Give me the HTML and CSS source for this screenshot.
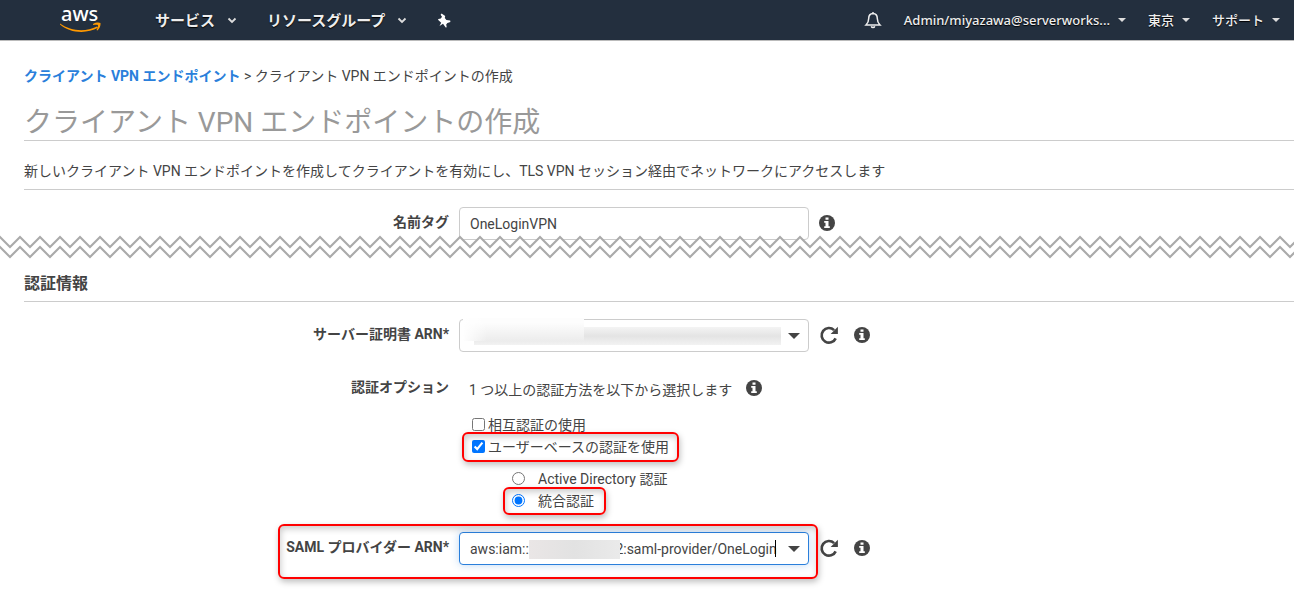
FILE: index.html
```
<!DOCTYPE html>
<html lang="ja">
<head>
    <meta charset="UTF-8">
    <meta name="viewport" content="width=device-width, initial-scale=1.0">
    <title>クライアント VPN エンドポイントの作成</title>
    <link rel="stylesheet" href="styles.css">
</head>
<body>
    <!-- Shared icons -->
    <svg class="sprite" width="0" height="0" aria-hidden="true">
        <symbol id="icon-info" viewBox="0 0 16 16">
            <circle cx="8" cy="8" r="8" fill="#444"/>
            <path d="M6.5 2.400h3v2.400h-3zM5.200 6h4.300v5.200h1.300V13H5.200v-1.800h1.300V7.800H5.200z" fill="#fff"/>
        </symbol>
        <symbol id="icon-refresh" viewBox="0 0 18 18">
            <path d="M15 12A6.600 6.600 0 1 1 13.600 4.600" fill="none" stroke="#444" stroke-width="2.400"/>
            <path d="M17 1.500v6.500h-6.500z" fill="#444"/>
        </symbol>
        <symbol id="icon-chevron" viewBox="0 0 10 7">
            <path d="M1.500 1.500L5 5l3.500-3.500" fill="none" stroke="#ddd" stroke-width="1.800"/>
        </symbol>
    </svg>

    <header class="navbar">
        <a class="logo" href="#" aria-label="aws">
            <svg width="44" height="40" viewBox="0 0 44 40">
                <text x="2" y="21" class="logo-text">aws</text>
                <path d="M1 23.500c11 8 26 8.500 37 3l1 1.300C28 34 11 33.500 1 24.500z" fill="#f90"/>
                <path d="M34 24c3-1.800 6-1.800 7.500-1 .2 2.500-.7 5.500-3 7.500l-1-.4c1-2 1.600-3.600 1.400-5.200-1.400-.3-3 0-4.700.2z" fill="#f90"/>
            </svg>
        </a>
        <nav class="nav-main">
            <button type="button" class="nav-item">サービス <svg width="10" height="7"><use href="#icon-chevron"/></svg></button>
            <button type="button" class="nav-item">リソースグループ <svg width="10" height="7"><use href="#icon-chevron"/></svg></button>
            <button type="button" class="nav-item" aria-label="ピン">
                <svg width="14" height="15" viewBox="0 0 14 15"><path d="M4.600.4L8.200 3l-.4 2 1.600 2 3.800.6.200 1.300-3 1.200-1.200 1.300.5 2.800-1 .2-2.700-3.700L2.500 13l1.700-3.300L1 6.800l.4-.9 2.400-.3L5 3.700 3.600 1.800z" fill="#fff"/></svg>
            </button>
        </nav>
        <nav class="nav-account">
            <button type="button" class="nav-link" aria-label="通知">
                <svg width="18" height="18" viewBox="0 0 18 18"><path d="M9 1v1.500C5.800 2.700 4.700 5 4.700 7.500c0 3.500-1 4.800-2.700 6.500h14c-1.700-1.700-2.700-3-2.700-6.500C13.300 5 12.200 2.700 9 2.500M7.300 15.200c.5 1.800 2.900 1.800 3.400 0" fill="none" stroke="#eee" stroke-width="1.500"/></svg>
            </button>
            <button type="button" class="nav-link">Admin/miyazawa@serverworks... <span class="arrow"></span></button>
            <button type="button" class="nav-link">東京 <span class="arrow"></span></button>
            <button type="button" class="nav-link">サポート <span class="arrow"></span></button>
        </nav>
    </header>

    <main class="content">
        <div class="breadcrumb"><a href="#">クライアント VPN エンドポイント</a> &gt; クライアント VPN エンドポイントの作成</div>
        <h1>クライアント VPN エンドポイントの作成</h1>
        <p class="description">新しいクライアント VPN エンドポイントを作成してクライアントを有効にし、TLS VPN セッション経由でネットワークにアクセスします</p>

        <form>
            <div class="form-row">
                <label class="row-label" for="name_tag">名前タグ</label>
                <div class="field"><input type="text" id="name_tag" value="OneLoginVPN"></div>
                <svg class="icon" width="16" height="16"><use href="#icon-info"/></svg>
            </div>

            <svg class="zigzag" width="100%" height="26" aria-hidden="true">
                <defs>
                    <pattern id="zigzag" width="20" height="26" patternUnits="userSpaceOnUse">
                        <path d="M-10 13L0 3l10 10L20 3l10 10v10L20 13 10 23 0 13-10 23z" fill="#fff"/>
                        <path d="M-10 13L0 3l10 10L20 3l10 10M-10 23L0 13l10 10 10-10 10 10" fill="none" stroke="#aaa" stroke-width="2"/>
                    </pattern>
                </defs>
                <rect width="100%" height="26" fill="url(#zigzag)"/>
            </svg>

            <h2>認証情報</h2>

            <div class="form-row">
                <label class="row-label" for="server_arn">サーバー証明書 ARN*</label>
                <div class="field combo">
                    <input type="text" id="server_arn">
                    <span class="mask mask-bottom"></span>
                    <span class="mask mask-top"></span>
                    <button type="button" class="toggle" aria-label="開く"></button>
                </div>
                <svg class="icon icon-refresh" width="20" height="20"><use href="#icon-refresh"/></svg>
                <svg class="icon" width="16" height="16"><use href="#icon-info"/></svg>
            </div>

            <div class="form-row options-row">
                <span class="row-label">認証オプション</span>
                <div class="options">
                    <div class="hint">1 つ以上の認証方法を以下から選択します <svg width="16" height="16"><use href="#icon-info"/></svg></div>
                    <label class="option"><input type="checkbox">相互認証の使用</label>
                    <label class="option highlight highlight-check"><input type="checkbox" checked>ユーザーベースの認証を使用</label>
                    <div class="sub-options">
                        <label class="option"><input type="radio" name="auth">Active Directory 認証</label>
                        <label class="option highlight highlight-radio"><input type="radio" name="auth" checked>統合認証</label>
                    </div>
                </div>
            </div>

            <div class="form-row highlight highlight-row">
                <label class="row-label" for="saml_arn">SAML プロバイダー ARN*</label>
                <div class="field combo focused">
                    <input type="text" id="saml_arn" value="aws:iam::&#8199;&#8199;&#8199;&#8199;&#8199;&#8199;&#8199;&#8199;&#8199;&#8199;&#8199;2:saml-provider/OneLogin">
                    <span class="mask mask-account"></span>
                    <span class="caret"></span>
                    <button type="button" class="toggle" aria-label="開く"></button>
                </div>
                <svg class="icon icon-refresh" width="20" height="20"><use href="#icon-refresh"/></svg>
                <svg class="icon" width="16" height="16"><use href="#icon-info"/></svg>
            </div>
        </form>
    </main>
</body>
</html>
```
FILE: styles.css
```
*, *::after {
    box-sizing: border-box;
}

body {
    margin: 0;
    background: #fff;
    font-family: Roboto, "Noto Sans CJK JP", sans-serif;
    font-size: 14px;
    line-height: 20px;
    color: #444;
}

button {
    border: none;
    background: none;
    padding: 0;
    font-family: inherit;
    cursor: pointer;
}

.sprite {
    position: absolute;
}

.navbar {
    display: flex;
    align-items: center;
    justify-content: space-between;
    height: 41px;
    padding: 0 14px 0 59px;
    background-color: #232f3e;
    border-bottom: 1px solid #bbb;
    font-family: "Noto Sans", "Noto Sans CJK JP", sans-serif;
}

.logo svg {
    display: block;
    overflow: visible;
}

.logo-text {
    font-family: "Noto Sans", sans-serif;
    font-size: 20px;
    font-weight: 500;
    fill: #fff;
}

.nav-main {
    display: flex;
    flex: 1;
    gap: 30px;
    margin-left: 52px;
}

.nav-item {
    display: flex;
    align-items: center;
    gap: 12px;
    font-size: 15px;
    font-weight: bold;
    line-height: 20px;
    color: #eee;
    text-shadow: 0 1px 1px #000;
}

.nav-account {
    display: flex;
    gap: 22px;
}

.nav-link {
    display: flex;
    align-items: center;
    gap: 8px;
    font-size: 13px;
    font-weight: 500;
    line-height: 20px;
    color: #eee;
    text-shadow: 0 1px 1px #000;
}

.arrow {
    border: 4px solid transparent;
    border-top-color: #ddd;
    border-bottom: none;
}

.content {
    padding: 25px 0 24px 24px;
}

.breadcrumb a {
    color: #2a7fdb;
    font-weight: bold;
    text-decoration: none;
}

h1 {
    margin: 20px 0 0;
    border-bottom: 1px solid #ccc;
    font-size: 28px;
    font-weight: 400;
    line-height: 34px;
    color: #999;
}

.description {
    margin: 0 0 17px;
    padding: 20px 0 8px;
    border-bottom: 1px solid #ccc;
}

h2 {
    margin: 14px 0 17px;
    padding-bottom: 7px;
    border-bottom: 1px solid #ccc;
    font-size: 16px;
    line-height: 20px;
}

.form-row {
    display: flex;
    align-items: flex-start;
}

.row-label {
    width: 425px;
    margin-right: 10px;
    padding-top: 5px;
    font-weight: bold;
    text-align: right;
}

.field {
    position: relative;
    width: 350px;
}

.field input {
    display: block;
    width: 100%;
    height: 33px;
    padding: 0 10px;
    border: 1px solid #ccc;
    border-radius: 4px;
    font-family: inherit;
    font-size: 14px;
    color: #444;
}

.combo input {
    padding-right: 30px;
}

.focused input {
    border-color: #2a7fdb;
    box-shadow: 0 0 8px rgba(42, 127, 219, 0.3);
}

.toggle {
    position: absolute;
    top: 14px;
    right: 9px;
    border: 6px solid transparent;
    border-top-color: #444;
    border-bottom: none;
}

.icon {
    flex: none;
    margin: 8px 5px 0 10px;
}

.icon-refresh {
    margin-top: 6px;
}

.zigzag {
    display: block;
    position: relative;
    width: calc(100% + 24px);
    margin: -6px 0 0 -24px;
}

/* Hidden parts of the ARNs */
.mask {
    position: absolute;
}

.mask-top {
    top: -1px;
    left: 4px;
    width: 121px;
    height: 23px;
    background: linear-gradient(to right, #fff, rgba(255, 255, 255, 0) 20%), linear-gradient(#fdfdfd 20%, #ececec);
}

.mask-bottom {
    top: 8px;
    left: 15px;
    width: 307px;
    height: 18px;
    background: linear-gradient(#f4f4f4, #e4e4e4 50%, #f2f2f2);
}

.mask-account {
    top: 8px;
    left: 70px;
    width: 91px;
    height: 19px;
    background: linear-gradient(to right, #eae6e6, #e2e2e2 50%, #eaeaea);
}

.caret {
    position: absolute;
    top: 8px;
    left: 316px;
    width: 1px;
    height: 17px;
    background: #000;
}

.options-row {
    margin-top: 20px;
}

.options {
    display: flex;
    flex-direction: column;
    align-items: flex-start;
    padding: 8px 0 0 10px;
}

.hint {
    display: flex;
    align-items: flex-start;
    gap: 14px;
    margin-bottom: 14px;
}

.option {
    display: flex;
    align-items: center;
    line-height: 22px;
}

.option input {
    margin: 0 3px 2px;
}

.sub-options {
    display: flex;
    flex-direction: column;
    align-items: flex-start;
    margin: 10px 0 0 40px;
}

.sub-options input {
    margin-right: 13px;
}

/* Red frames round the settings to choose */
.highlight {
    position: relative;
}

.highlight::after {
    content: "";
    position: absolute;
    border: 2px solid #f00;
    border-radius: 6px;
    box-shadow: 1px 3px 6px rgba(0, 0, 0, 0.25), inset 1px 3px 6px rgba(0, 0, 0, 0.2);
    pointer-events: none;
}

.highlight-check::after {
    inset: -4px -10px -4px -7px;
}

.highlight-radio::after {
    inset: -3px -12px -3px -6px;
}

.highlight-row {
    margin-top: 20px;
}

.highlight-row::after {
    top: -8px;
    left: 254px;
    width: 540px;
    height: 55px;
}
```
